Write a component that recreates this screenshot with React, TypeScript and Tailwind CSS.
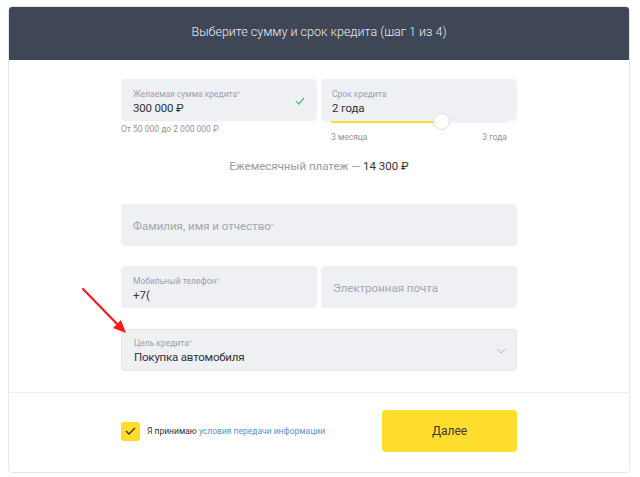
import React from "react";

const font = { fontFamily: "Roboto, 'Noto Sans', sans-serif" };

function Req() {
  return <span className="align-top text-[6.5px] text-[#b7bcc4]">*</span>;
}

function FieldLabel({ children, required }: { children: React.ReactNode; required?: boolean }) {
  return (
    <div className="text-[8.5px] leading-[12px] text-[#9ba1ab]">
      {children}
      {required && <Req />}
    </div>
  );
}

export default function App() {
  return (
    <div className="relative min-h-[477px] bg-white pt-[6px]" style={font}>
      <div className="ml-2 w-[622px] overflow-hidden rounded-[4px] border border-[#e6e8eb]">
        <div className="flex h-[53px] items-center justify-center bg-[#3f4756]">
          <h1 className="mt-[-2px] text-[12.5px] font-light text-[#e9ebee]">
            Выберите сумму и срок кредита (шаг 1 из 4)
          </h1>
        </div>

        <div className="flex flex-col items-center pb-[21px] pt-[19px]">
          <div className="w-[396px]">
            <div className="flex gap-[4px]">
              <div className="w-[196px]">
                <div className="flex h-[42px] items-center justify-between rounded-[4px] bg-[#eef0f4] pl-3 pr-[12px] pt-[3px]">
                  <div>
                    <FieldLabel required>Желаемая сумма кредита</FieldLabel>
                    <div className="text-[11.5px] leading-[16px] tracking-[-0.2px] text-[#333]">300 000 ₽</div>
                  </div>
                  <svg width="10" height="8" viewBox="0 0 10 8" className="mt-[-2px]">
                    <path d="M1 4.2 L3.8 7 L9 1" fill="none" stroke="#4fba6f" strokeWidth="1.2" />
                  </svg>
                </div>
                <div className="mt-[2px] text-[8.5px] leading-[12px] text-[#8f959e]">
                  От 50 000 до 2 000 000 ₽
                </div>
              </div>

              <div className="w-[196px]">
                <div className="flex h-[42px] flex-col justify-center rounded-[4px] bg-[#eef0f4] pl-[11px] pt-[3px]">
                  <FieldLabel>Срок кредита</FieldLabel>
                  <div className="text-[11.5px] leading-[16px] tracking-[-0.2px] text-[#333]">2 года</div>
                </div>
                <div className="relative mx-[10px] flex h-[2px]">
                  <div className="w-[110px] bg-[#ffdd2d]" />
                  <div className="flex-1 bg-[#eef0f4]" />
                  <div className="absolute left-[102px] top-[-8px] h-[17px] w-[17px] rounded-full border border-[#d8dbe0] bg-white" />
                </div>
                <div className="mx-[10px] mt-[8px] flex justify-between text-[8.5px] leading-[12px] text-[#8f959e]">
                  <span>3 месяца</span>
                  <span>3 года</span>
                </div>
              </div>
            </div>

            <div className="mt-[15px] text-center text-[11.5px] leading-[16px] text-[#959ba4]">
              Ежемесячный платеж — <span className="text-[#333]">14 300 ₽</span>
            </div>

            <div className="mt-[30px] flex h-[42px] items-center rounded-[4px] bg-[#eef0f4] pl-3 pt-[3px] text-[11.5px] text-[#a3a8b0]">
              Фамилия, имя и отчество
              <Req />
            </div>

            <div className="mt-[20px] flex gap-[4px]">
              <div className="flex h-[42px] w-[196px] flex-col justify-center rounded-[4px] bg-[#eef0f4] pl-3 pt-[3px]">
                <FieldLabel required>Мобильный телефон</FieldLabel>
                <div className="text-[11.5px] leading-[16px] text-[#333]">+7(</div>
              </div>
              <div className="flex h-[42px] w-[196px] items-center rounded-[4px] bg-[#eef0f4] pl-3 pt-[3px] text-[11.5px] text-[#a3a8b0]">
                Электронная почта
              </div>
            </div>

            <div className="mt-[21px] flex h-[42px] items-center justify-between rounded-[4px] border border-[#e2e5ea] bg-[#eef0f4] pl-3 pr-[10px] pt-[2px]">
              <div>
                <FieldLabel required>Цель кредита</FieldLabel>
                <div className="text-[11.5px] leading-[17px] tracking-[-0.2px] text-[#333]">Покупка автомобиля</div>
              </div>
              <svg width="10" height="6" viewBox="0 0 10 6">
                <path d="M1 1 L5 5 L9 1" fill="none" stroke="#b4b9c1" strokeWidth="1" />
              </svg>
            </div>
          </div>
        </div>

        <div className="flex justify-center border-t border-[#eceef1] pb-[20px] pt-[17px]">
          <div className="flex w-[396px] items-center justify-between">
            <div className="flex items-center gap-[7px]">
              <div className="flex h-[19px] w-[19px] items-center justify-center rounded-[3px] bg-[#ffdd2d]">
                <svg width="11" height="8" viewBox="0 0 11 8">
                  <path d="M1 4 L4 7 L10 1" fill="none" stroke="#333" strokeWidth="1.4" />
                </svg>
              </div>
              <span className="text-[8.5px] text-[#333]">
                Я принимаю <span className="text-[#5f8fc6]">условия передачи информации</span>
              </span>
            </div>
            <button className="flex h-[42px] w-[135px] items-center justify-center rounded-[4px] bg-[#ffdd2d] text-[12px] text-[#3a3a3a]">
              Далее
            </button>
          </div>
        </div>
      </div>

      <svg
        className="pointer-events-none absolute left-0 top-0"
        width="640"
        height="477"
        viewBox="0 0 640 477"
      >
        <line x1="83" y1="289" x2="121" y2="328" stroke="#ff1a1a" strokeWidth="2.2" strokeLinecap="round" />
        <path d="M126 333 L113 328 L121 320 Z" fill="#ff1a1a" />
      </svg>
    </div>
  );
}
